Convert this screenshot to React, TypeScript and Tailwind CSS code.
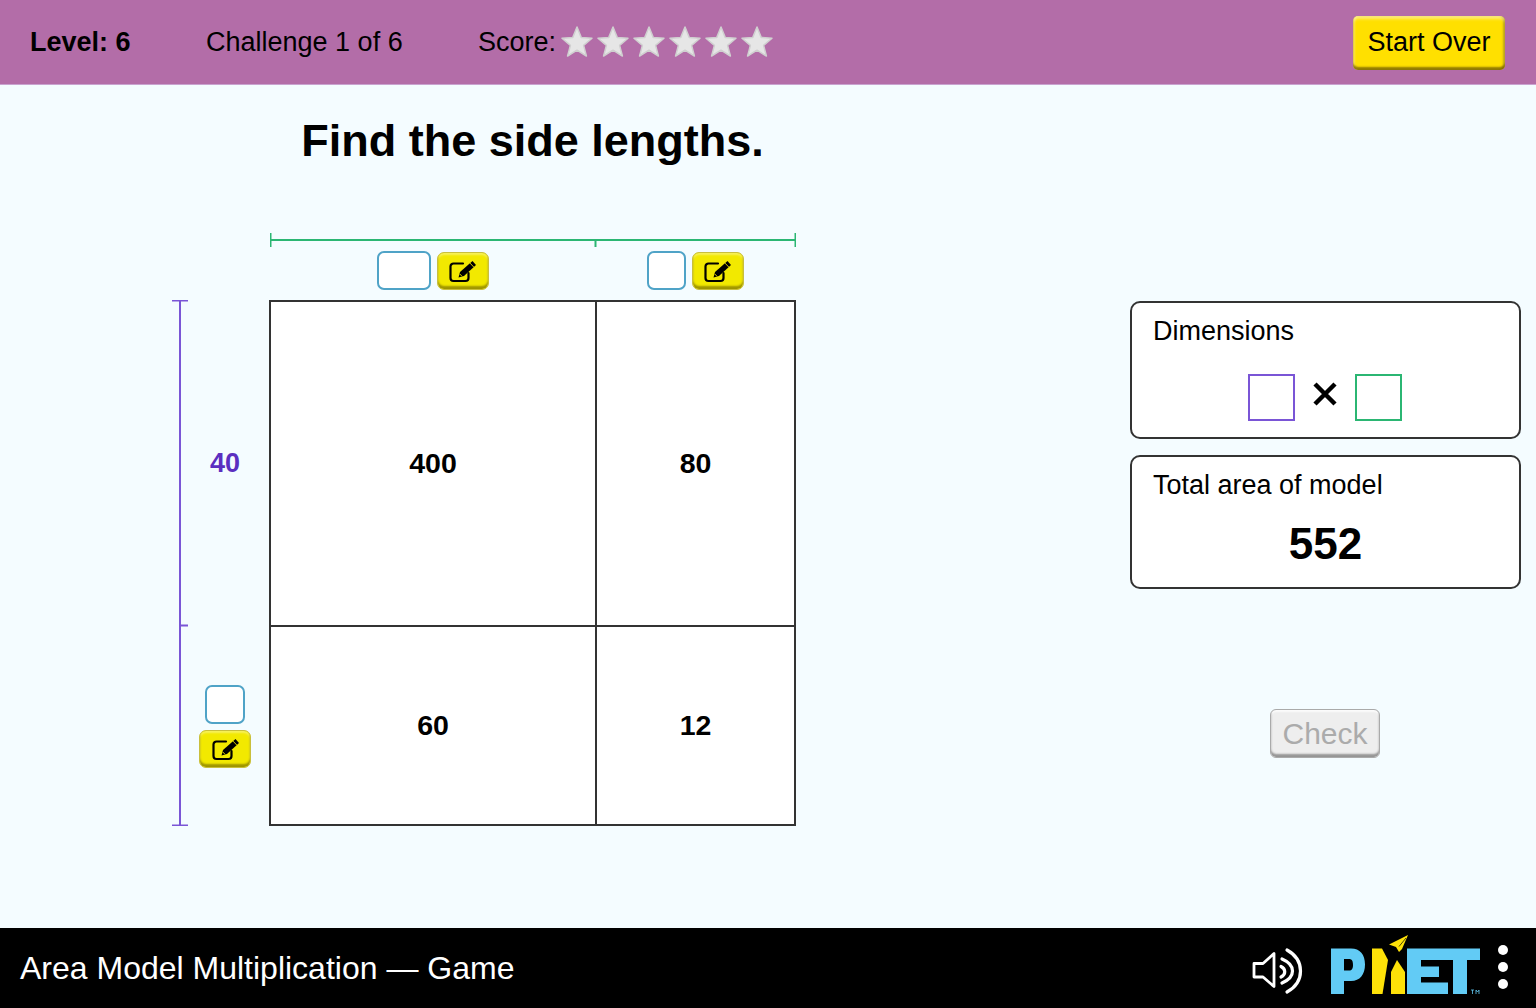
import React from "react";

function Star() {
  return (
    <svg viewBox="0 0 32 32" className="w-8 h-8 -mx-[0.5px]">
      <polygon
        points="16,1 20.2,11.4 31,12.2 22.6,19.4 25.4,30 16,24.2 6.6,30 9.4,19.4 1,12.2 11.8,11.4"
        fill="#e6e6e6"
        stroke="#d0d0d0"
        strokeWidth="1.5"
        strokeLinejoin="round"
      />
    </svg>
  );
}

function EditIcon() {
  return (
    <svg viewBox="0 0 27 24" className="w-[27px] h-[24px]">
      <path
        d="M14 4.5H4.5a3 3 0 0 0-3 3v11.5a3 3 0 0 0 3 3h12a3 3 0 0 0 3-3v-5"
        fill="none"
        stroke="#000"
        strokeWidth="2.2"
        strokeLinecap="round"
      />
      <path d="M23.5 2L27 6L15 17L9.5 18.5L11 13Z" fill="#000" />
      <path d="M21 4.1L24.8 8.1" stroke="#f2e900" strokeWidth="0.9" />
      <path d="M10.8 15L13 17.3" stroke="#f2e900" strokeWidth="0.9" />
    </svg>
  );
}

function EditButton() {
  return (
    <button className="w-[52px] h-[38px] rounded-[7px] bg-[#f2e900] border border-[#c9bf3c] shadow-[inset_0_-3px_2px_rgba(90,80,0,0.55),inset_0_2px_2px_rgba(255,255,255,0.35)] flex items-center justify-center shrink-0">
      <EditIcon />
    </button>
  );
}

function SideInput({ className }: { className: string }) {
  return <div className={`h-[39px] rounded-[7px] bg-white border-2 border-[#4fa3c7] shrink-0 ${className}`} />;
}

function CellValue({ value }: { value: string }) {
  return <div className="flex items-center justify-center font-bold text-[28.5px] text-black">{value}</div>;
}

function PhetLogo() {
  return (
    <svg viewBox="0 0 165 70" className="w-[165px] h-[70px] block">
      <path
        fillRule="evenodd"
        d="M6 18.5H26C35 18.5 40 24.5 40 34.5C40 44.5 35 51 26 51H19V64H6ZM19 29V40.5H24C27 40.5 28 38.5 28 35C28 31 27 29 24 29Z"
        fill="#62cbf5"
      />
      <path d="M47 18.5H57L63 30L57.5 64H47Z" fill="#fee108" />
      <path d="M72 30L80 42V64H66V42Z" fill="#fee108" />
      <path d="M83 5L64 14.5L71 17L74 22L77 19Z" fill="#fee108" />
      <path d="M81 8L74 16.5" stroke="#000" strokeWidth="0.7" />
      <path d="M82 18.5H155V30H142V64H128V30H96V36.5H114V47H96V52.5H123V64H82Z" fill="#62cbf5" />
      <path d="M146 60H149M147.5 60V64M151 64V60L152.5 62L154 60V64" stroke="#62cbf5" strokeWidth="0.8" fill="none" />
    </svg>
  );
}

function SpeakerIcon() {
  return (
    <svg viewBox="0 0 65 60" className="w-[65px] h-[60px] block" fill="none" stroke="#fff" strokeLinecap="round" strokeLinejoin="round">
      <path d="M9 23.5H18L29 13.5V46.5L18 37H9Z" strokeWidth="2.8" />
      <path d="M36 26.5C41 29 41 34.5 36 37" strokeWidth="3.2" />
      <path d="M37 19C51 25 51 37 37 43" strokeWidth="3.2" />
      <path d="M42 10C60 20 60 42 42 52" strokeWidth="3.2" />
    </svg>
  );
}

export default function App() {
  return (
    <div className="w-[1536px] h-[1008px] flex flex-col overflow-hidden font-['Liberation_Sans',Arial,sans-serif] text-black bg-[#f4fcff]">
      <header className="h-[85px] shrink-0 bg-[#b36da8] flex items-center pl-[30px] pr-[31px] text-[27px] border-b border-[#c9a3d0]">
        <div className="font-bold w-[176px]">Level: 6</div>
        <div className="w-[272px]">Challenge 1 of 6</div>
        <div className="flex items-center gap-[5px]">
          <span>Score:</span>
          <div className="flex gap-[5px]">
            <Star />
            <Star />
            <Star />
            <Star />
            <Star />
            <Star />
          </div>
        </div>
        <button className="ml-auto mt-[1px] w-[152px] h-[54px] rounded-[5px] bg-[#ffe000] text-[27px] shadow-[inset_0_-3px_2px_rgba(110,90,0,0.75),inset_0_3px_3px_rgba(255,255,255,0.45),inset_2px_0_2px_rgba(255,255,255,0.25),inset_-2px_0_2px_rgba(110,90,0,0.4)]">
          Start Over
        </button>
      </header>

      <main className="flex-1 flex">
        <section className="w-[1130px] shrink-0 pl-[172px]">
          <h1 className="ml-[98px] w-[525px] mt-[31px] text-center font-bold text-[45px] leading-[50px]">
            Find the side lengths.
          </h1>

          <svg viewBox="0 0 526 14" className="ml-[98px] mt-[67px] w-[526px] h-[14px] block" stroke="#2bb673" strokeWidth="2">
            <path d="M0.5 7H525.5M0.5 0V14M525.5 0V14M325.5 7V14" fill="none" />
          </svg>

          <div className="ml-[98px] w-[525px] mt-[4px] grid grid-cols-[325px_200px]">
            <div className="flex items-center justify-center gap-[6px]">
              <SideInput className="w-[54px]" />
              <EditButton />
            </div>
            <div className="flex items-center justify-center gap-[6px]">
              <SideInput className="w-[39px]" />
              <EditButton />
            </div>
          </div>

          <div className="mt-[10px] flex">
            <svg viewBox="0 0 16 526" className="w-[16px] h-[526px] shrink-0" stroke="#7a55d6" strokeWidth="2" fill="none">
              <path d="M8 0.5V525.5M0 0.5H16M0 525.5H16M8 325.5H16" />
            </svg>
            <div className="w-[81px] shrink-0 grid grid-rows-[325px_201px]">
              <div className="flex items-center justify-center pr-[7px] pt-[2px]">
                <span className="font-bold text-[27px] text-[#5b2fc0]">40</span>
              </div>
              <div className="flex flex-col items-center justify-center gap-[6px] pr-[7px] pt-[2px]">
                <SideInput className="w-[40px]" />
                <EditButton />
              </div>
            </div>
            <div className="w-[527px] h-[526px] grid grid-cols-[326px_1fr] grid-rows-[325px_1fr] border-2 border-[#333] bg-white shrink-0">
              <div className="border-r-2 border-b-2 border-[#333] flex items-center justify-center pb-[1px]">
                <CellValue value="400" />
              </div>
              <div className="border-b-2 border-[#333] flex items-center justify-center pb-[1px]">
                <CellValue value="80" />
              </div>
              <div className="border-r-2 border-[#333] flex items-center justify-center">
                <CellValue value="60" />
              </div>
              <div className="flex items-center justify-center">
                <CellValue value="12" />
              </div>
            </div>
          </div>
        </section>

        <aside className="w-[391px] shrink-0 pt-[216px] flex flex-col">
          <div className="h-[138px] rounded-[10px] border-2 border-[#333] bg-white pl-[21px] pt-[12px]">
            <div className="text-[27px] leading-[32px]">Dimensions</div>
            <div className="mt-[27px] pr-[22px] flex items-center justify-center gap-[18px]">
              <div className="w-[47px] h-[47px] border-2 border-[#7a55d6]" />
              <svg viewBox="0 0 24 24" className="w-[24px] h-[24px] -mt-[8px]" stroke="#000" strokeWidth="4.5">
                <path d="M2 2L22 22M22 2L2 22" />
              </svg>
              <div className="w-[47px] h-[47px] border-2 border-[#2bb673]" />
            </div>
          </div>
          <div className="mt-[16px] h-[134px] rounded-[10px] border-2 border-[#333] bg-white pl-[21px] pt-[12px]">
            <div className="text-[27px] leading-[32px]">Total area of model</div>
            <div className="mt-[18px] text-center font-bold text-[44px] leading-[50px] pr-[21px]">552</div>
          </div>
          <button className="mt-[120px] ml-[140px] self-start w-[110px] h-[49px] rounded-[6px] bg-[#eeeeee] border border-[#aaa] text-[#ababab] text-[30px] shadow-[inset_0_-3px_2px_rgba(90,90,90,0.6),inset_0_2px_2px_rgba(255,255,255,0.8)]">
            Check
          </button>
        </aside>
      </main>

      <footer className="h-[80px] shrink-0 bg-black flex items-center pl-[20px] text-white">
        <div className="text-[32px]">Area Model Multiplication — Game</div>
        <div className="ml-auto flex items-center pr-[28px]">
          <div className="mt-[4px]">
            <SpeakerIcon />
          </div>
          <div className="ml-[15px] mb-[6px]">
            <PhetLogo />
          </div>
          <div className="ml-[8px] mb-[2px] flex flex-col gap-[7px]">
            <span className="block w-[10px] h-[10px] rounded-full bg-white" />
            <span className="block w-[10px] h-[10px] rounded-full bg-white" />
            <span className="block w-[10px] h-[10px] rounded-full bg-white" />
          </div>
        </div>
      </footer>
    </div>
  );
}
